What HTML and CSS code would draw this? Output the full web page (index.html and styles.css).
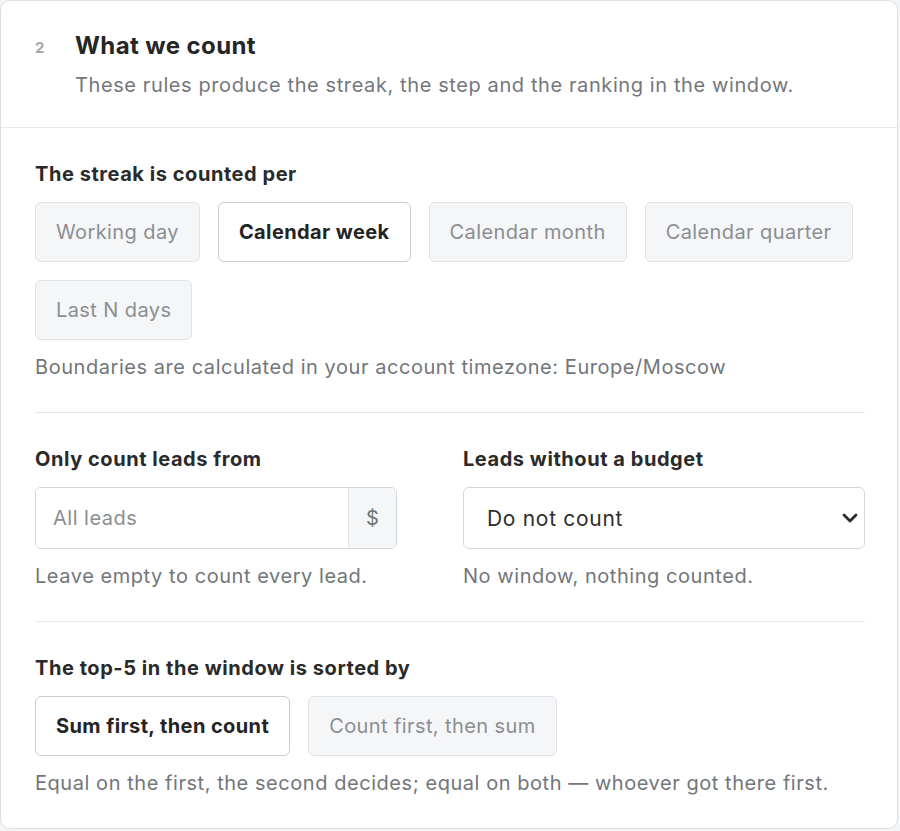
FILE: index.html
```html
<!DOCTYPE html>
<html lang="en">
<head>
<meta charset="utf-8">
<title>What we count</title>
<link rel="stylesheet" href="styles.css">
</head>
<body>
<section class="card">
  <header class="card-head">
    <span class="step">2</span>
    <div class="head-text">
      <h2 class="title">What we count</h2>
      <p class="subtitle">These rules produce the streak, the step and the ranking in the window.</p>
    </div>
  </header>
  <div class="card-body">
    <div class="field">
      <div class="label">The streak is counted per</div>
      <div class="options">
        <button class="opt">Working day</button>
        <button class="opt is-active">Calendar week</button>
        <button class="opt">Calendar month</button>
        <button class="opt">Calendar quarter</button>
        <button class="opt">Last N days</button>
      </div>
      <div class="help">Boundaries are calculated in your account timezone: Europe/Moscow</div>
    </div>
    <hr class="divider">
    <div class="cols">
      <div class="field">
        <div class="label">Only count leads from</div>
        <div class="input-group">
          <input class="input" type="text" placeholder="All leads">
          <span class="addon">$</span>
        </div>
        <div class="help">Leave empty to count every lead.</div>
      </div>
      <div class="field">
        <div class="label">Leads without a budget</div>
        <div class="select-wrap">
          <select class="select">
            <option>Do not count</option>
          </select>
          <svg class="chevron" width="16" height="10" viewBox="0 0 16 10"><path d="M2 2 L8 8 L14 2" fill="none" stroke="#2b2b2b" stroke-width="2.8" stroke-linecap="round" stroke-linejoin="round"/></svg>
        </div>
        <div class="help">No window, nothing counted.</div>
      </div>
    </div>
    <hr class="divider">
    <div class="field">
      <div class="label">The top-5 in the window is sorted by</div>
      <div class="options">
        <button class="opt is-active">Sum first, then count</button>
        <button class="opt">Count first, then sum</button>
      </div>
      <div class="help">Equal on the first, the second decides; equal on both — whoever got there first.</div>
    </div>
  </div>
</section>
</body>
</html>
```
FILE: styles.css
```css
* { box-sizing: border-box; }
html, body { margin: 0; padding: 0; background: #f4f5f7; }
body {
  font-family: Inter, "Noto Sans", "Liberation Sans", sans-serif;
  color: #2a2a2a;
}
.card {
  width: 898px;
  background: #fff;
  border: 1px solid #dcdfe3;
  border-radius: 10px;
}
.card-head {
  display: flex;
  padding: 29px 32px 28px 34px;
  border-bottom: 1px solid #e6e8eb;
}
.step {
  width: 40px;
  flex: none;
  font-size: 15px;
  font-weight: 700;
  color: #a3a6ab;
  line-height: 32px;
  padding-top: 2px;
}
.title {
  margin: 0;
  font-size: 24px;
  line-height: 32px;
  font-weight: 700;
  color: #262626;
  letter-spacing: 0.4px;
}
.subtitle {
  margin: 9px 0 0;
  font-size: 20px;
  line-height: 28px;
  color: #74777c;
  letter-spacing: 0.6px;
}
.card-body {
  padding: 32px 32px 31px 34px;
}
.label {
  font-size: 20px;
  line-height: 28px;
  font-weight: 700;
  color: #2a2a2a;
  letter-spacing: 0.55px;
  margin-bottom: 14px;
}
.options {
  display: flex;
  flex-wrap: wrap;
  gap: 18px;
}
.opt {
  height: 60px;
  padding: 0 20px;
  font-family: inherit;
  font-size: 20px;
  letter-spacing: 0.4px;
  color: #8b8e93;
  background: #f5f6f8;
  border: 1px solid #dfe1e5;
  border-radius: 6px;
}
.opt.is-active {
  background: #fff;
  border-color: #c9ccd1;
  color: #242424;
  font-weight: 700;
}
.help {
  margin-top: 13px;
  font-size: 20px;
  line-height: 28px;
  letter-spacing: 0.55px;
  color: #72767b;
}
.divider {
  border: 0;
  border-top: 1px solid #e6e8eb;
  margin: 31px 0 32px;
}
.cols {
  display: grid;
  grid-template-columns: 1fr 1fr;
  gap: 26px;
}
.input-group {
  display: flex;
  width: 362px;
  height: 62px;
  border: 1px solid #d3d6da;
  border-radius: 6px;
  overflow: hidden;
}
.input {
  flex: 1;
  min-width: 0;
  border: 0;
  padding: 0 17px;
  font-family: inherit;
  font-size: 20px;
  letter-spacing: 0.5px;
  color: #333;
  background: #fff;
}
.input::placeholder { color: #8b8e93; }
.addon {
  width: 48px;
  flex: none;
  display: flex;
  align-items: center;
  justify-content: center;
  background: #f5f6f8;
  border-left: 1px solid #e0e2e6;
  font-size: 20px;
  color: #6f7378;
}
.select-wrap {
  position: relative;
}
.select {
  width: 100%;
  height: 62px;
  appearance: none;
  -webkit-appearance: none;
  padding: 0 40px 0 23px;
  font-family: inherit;
  font-size: 21px;
  letter-spacing: 0.7px;
  color: #2e2e2e;
  background: #fff;
  border: 1px solid #d3d6da;
  border-radius: 6px;
}
.chevron {
  position: absolute;
  right: 7px;
  top: 26px;
  pointer-events: none;
}
```
